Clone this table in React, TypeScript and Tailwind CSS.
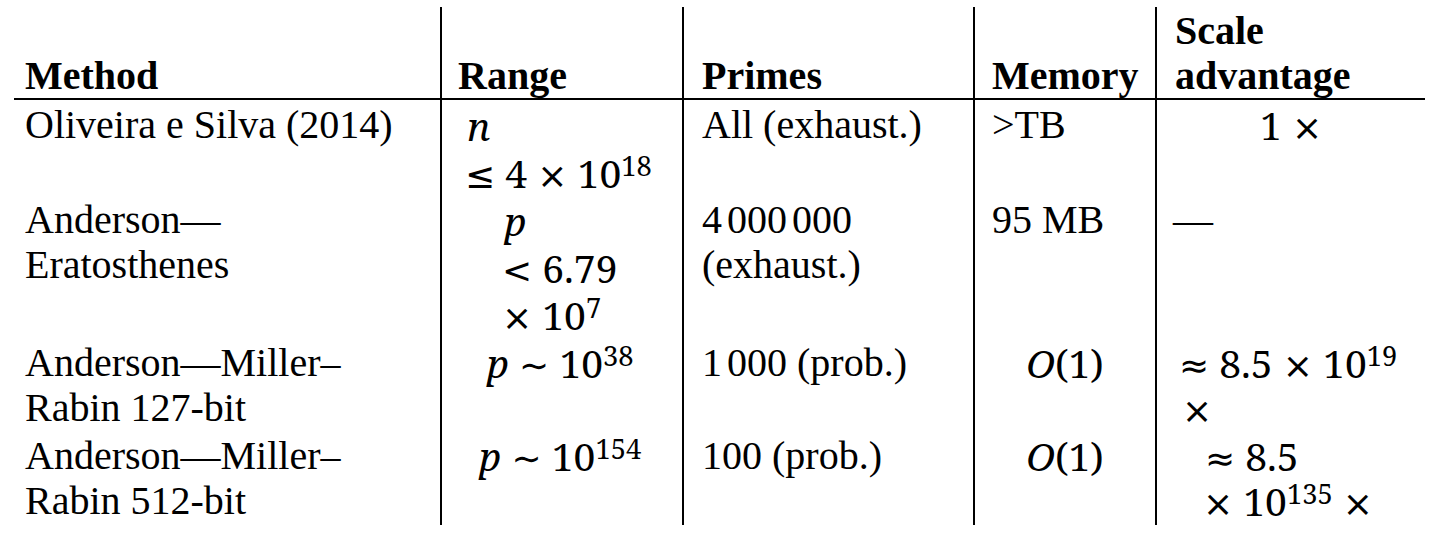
import React from "react";

const MATH = "font-['Noto_Serif','DejaVu_Serif',serif] text-[39px] not-italic";
const HEAD = "flex flex-col justify-end border-b-2 border-black font-bold";
const CELL = "pt-[2px]";
const VL = "border-l-2 border-black";

function Sup({ children }: { children: React.ReactNode }) {
  return <sup className="text-[0.7em] top-[-0.45em]">{children}</sup>;
}

function V({ children }: { children: React.ReactNode }) {
  return <i className="italic">{children}</i>;
}

function Op({ children }: { children: React.ReactNode }) {
  return <span className="font-['DejaVu_Sans',sans-serif] text-[36px] leading-none">{children}</span>;
}

export default function App() {
  return (
    <div className="w-[1447px] h-[548px] bg-white overflow-hidden">
      <div className="ml-[14px] mt-[7px] grid w-[1411px] grid-cols-[426px_242px_291px_182px_270px] grid-rows-[93px_95px_143px_93px_94px] font-['Liberation_Serif','Times_New_Roman',serif] text-[40px] leading-[45px] text-black">
        {/* Header */}
        <div className={`${HEAD} pl-[11px]`}>Method</div>
        <div className={`${HEAD} ${VL} pl-[16px]`}>Range</div>
        <div className={`${HEAD} ${VL} pl-[18px]`}>Primes</div>
        <div className={`${HEAD} ${VL} pl-[17px]`}>Memory</div>
        <div className={`${HEAD} ${VL} pl-[18px]`}>
          <div>Scale</div>
          <div>advantage</div>
        </div>

        {/* Row 1 */}
        <div className={`${CELL} pl-[11px]`}>Oliveira e Silva (2014)</div>
        <div className={`${CELL} ${VL} ${MATH}`}>
          <div className="leading-[47px] pl-[25px]"><V>n</V></div>
          <div className="leading-[47px] pl-[23px]">
            <Op>≤</Op> 4 <Op>×</Op> 10<Sup>18</Sup>
          </div>
        </div>
        <div className={`${CELL} ${VL} pl-[18px]`}>All (exhaust.)</div>
        <div className={`${CELL} ${VL} pl-[17px]`}>&gt;TB</div>
        <div className={`${CELL} ${VL} ${MATH} text-center leading-[45px]`}>
          1 <Op>×</Op>
        </div>

        {/* Row 2 */}
        <div className={`${CELL} pl-[11px]`}>
          <div>Anderson—</div>
          <div>Eratosthenes</div>
        </div>
        <div className={`${CELL} ${VL} ${MATH}`}>
          <div className="leading-[47px] pl-[62px]"><V>p</V></div>
          <div className="leading-[47px] pl-[60px]">
            <Op>&lt;</Op> 6.79
          </div>
          <div className="leading-[47px] pl-[60px]">
            <Op>×</Op> 10<Sup>7</Sup>
          </div>
        </div>
        <div className={`${CELL} ${VL} pl-[18px]`}>
          <div className="[word-spacing:-5px]">4 000 000</div>
          <div>(exhaust.)</div>
        </div>
        <div className={`${CELL} ${VL} pl-[17px]`}>95 MB</div>
        <div className={`${CELL} ${VL} pl-[16px]`}>—</div>

        {/* Row 3 */}
        <div className={`${CELL} pl-[11px]`}>
          <div>Anderson—Miller–</div>
          <div>Rabin 127-bit</div>
        </div>
        <div className={`${CELL} ${VL} ${MATH} text-center pr-[4px] leading-[45px]`}>
          <V>p</V> <Op>∼</Op> 10<Sup>38</Sup>
        </div>
        <div className={`${CELL} ${VL} pl-[18px]`}>
          <span className="[word-spacing:-5px]">1 000</span> (prob.)
        </div>
        <div className={`${CELL} ${VL} ${MATH} text-center leading-[45px]`}>
          <V>O</V>(1)
        </div>
        <div className={`${CELL} ${VL} ${MATH} leading-[45px]`}>
          <div className="pl-[22px]">
            <Op>≈</Op> 8.5 <Op>×</Op> 10<Sup>19</Sup>
          </div>
          <div className="pl-[25px]">
            <Op>×</Op>
          </div>
        </div>

        {/* Row 4 */}
        <div className={`${CELL} pl-[11px]`}>
          <div>Anderson—Miller–</div>
          <div>Rabin 512-bit</div>
        </div>
        <div className={`${CELL} ${VL} ${MATH} text-center pr-[4px] leading-[45px]`}>
          <V>p</V> <Op>∼</Op> 10<Sup>154</Sup>
        </div>
        <div className={`${CELL} ${VL} pl-[18px]`}>100 (prob.)</div>
        <div className={`${CELL} ${VL} ${MATH} text-center leading-[45px]`}>
          <V>O</V>(1)
        </div>
        <div className={`${CELL} ${VL} ${MATH} leading-[45px]`}>
          <div className="pl-[48px]">
            <Op>≈</Op> 8.5
          </div>
          <div className="pl-[46px]">
            <Op>×</Op> 10<Sup>135</Sup> <Op>×</Op>
          </div>
        </div>
      </div>
    </div>
  );
}
